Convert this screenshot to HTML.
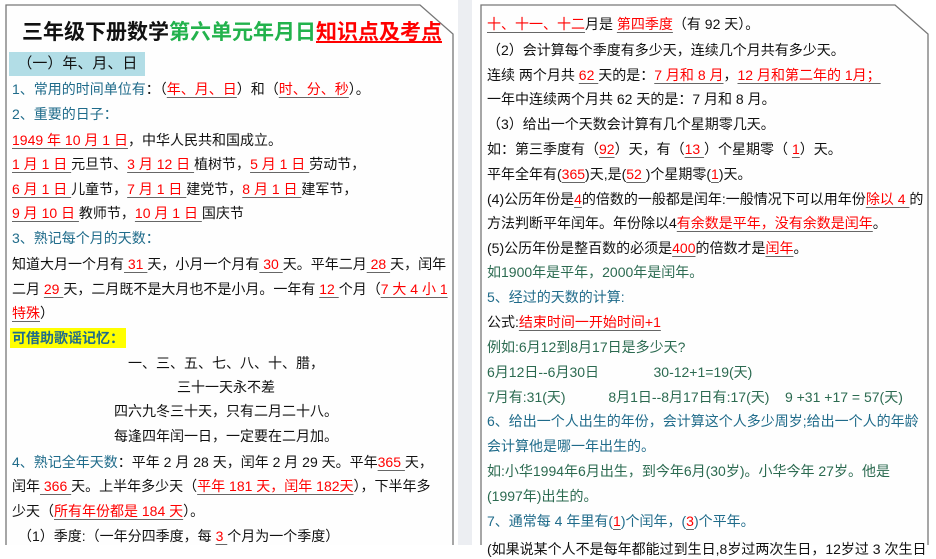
<!DOCTYPE html>
<html><head><meta charset="utf-8"><style>
html,body{margin:0;padding:0}
body{width:936px;height:545px;overflow:hidden;background:#fff;position:relative;font-family:"Liberation Sans","Noto Sans CJK SC",sans-serif;font-size:14px;color:#111}
.strip{position:absolute;left:458px;top:0;width:14px;height:545px;background:#eceef2}
.l{position:absolute;white-space:nowrap;line-height:20px;height:20px}
.r{color:#f00;text-decoration:underline;text-decoration-color:#666;text-underline-offset:3px}
.b{color:#1f6b8a}
.g{color:#2b6a50}
.c{text-align:center;width:440px;left:6px}
svg{position:absolute;left:0;top:0}
</style></head><body>
<div class="strip"></div>
<svg width="936" height="545">
<polyline points="6,545 6,5 420,5 453,34 453,545" fill="#fefefe" stroke="#777" stroke-width="1.3"/>
<polyline points="481,545 481,5 895,5 928,34 928,545" fill="#fefefe" stroke="#777" stroke-width="1.3"/>
</svg>
<div class="l" style="left:22px;top:19px;height:28px;line-height:28px;font-size:21px;font-weight:bold">三年级下册数学<span style="color:#22b24c">第六单元年月日</span><span style="color:#f00;text-decoration:underline">知识点及考点</span></div>
<div class="l" style="left:9px;top:52px;width:136px;height:24px;line-height:24px;background:#b2dde6;font-size:15px">&nbsp;&nbsp;（一）年、月、日</div>
<div class="l b" style="left:12px;top:79px">1、常用的时间单位有<span style="color:#111">：（<span class="r">年、月、日</span>）和（<span class="r">时、分、秒</span>）。</span></div>
<div class="l b" style="left:12px;top:104px">2、重要的日子：</div>
<div class="l" style="left:12px;top:130px"><span class="r">1949 年 10 月 1 日</span>，中华人民共和国成立。</div>
<div class="l" style="left:12px;top:154px"><span class="r">1 月 1 日 </span>元旦节、<span class="r">3 月 12 日 </span>植树节，<span class="r">5 月 1 日 </span>劳动节，</div>
<div class="l" style="left:12px;top:179px"><span class="r">6 月 1 日 </span>儿童节，<span class="r">7 月 1 日 </span>建党节，<span class="r">8 月 1 日 </span>建军节，</div>
<div class="l" style="left:12px;top:203px"><span class="r">9 月 10 日 </span>教师节，<span class="r">10 月 1 日 </span>国庆节</div>
<div class="l b" style="left:12px;top:228px">3、熟记每个月的天数：</div>
<div class="l" style="left:12px;top:254px">知道大月一个月有<span class="r"> 31 </span>天，小月一个月有<span class="r"> 30 </span>天。平年二月<span class="r"> 28 </span>天，闰年</div>
<div class="l" style="left:12px;top:279px">二月 <span class="r">29 </span>天，二月既不是大月也不是小月。一年有 <span class="r">12 </span>个月（<span class="r">7 大 4 小 1</span></div>
<div class="l" style="left:12px;top:303px"><span class="r">特殊</span>）</div>
<div class="l b" style="left:10px;top:328px;background:#ff0;font-weight:bold;padding:0 2px">可借助歌谣记忆：</div>
<div class="l c" style="top:353px">一、三、五、七、八、十、腊，</div>
<div class="l c" style="top:377px">三十一天永不差</div>
<div class="l c" style="top:401px">四六九冬三十天，只有二月二十八。</div>
<div class="l c" style="top:426px">每逢四年闰一日，一定要在二月加。</div>
<div class="l" style="left:12px;top:452px"><span class="b">4、熟记全年天数</span>：平年 2 月 28 天，闰年 2 月 29 天。平年<span class="r">365 </span>天，</div>
<div class="l" style="left:12px;top:476px">闰年<span class="r"> 366 </span>天。上半年多少天（<span class="r">平年 181 天，闰年 182天</span>），下半年多</div>
<div class="l" style="left:12px;top:501px">少天（<span class="r">所有年份都是 184 天</span>）。</div>
<div class="l" style="left:18px;top:526px">（1）季度:（一年分四季度，每 <span class="r">3 </span>个月为一个季度）</div>

<div class="l" style="left:487px;top:14px"><span class="r">十、十一、十二</span>月是 <span class="r">第四季度</span>（有 92 天）。</div>
<div class="l" style="left:487px;top:40px">（2）会计算每个季度有多少天，连续几个月共有多少天。</div>
<div class="l" style="left:487px;top:65px">连续 两个月共 <span class="r">62 </span>天的是：<span class="r">7 月和 8 月</span>，<span class="r">12 月和第二年的 1月；</span></div>
<div class="l" style="left:487px;top:89px">一年中连续两个月共 62 天的是：7 月和 8 月。</div>
<div class="l" style="left:487px;top:114px">（3）给出一个天数会计算有几个星期零几天。</div>
<div class="l" style="left:487px;top:139px">如：第三季度有（<span class="r">92</span>）天，有（<span class="r">13 </span>）个星期零（ <span class="r">1</span>）天。</div>
<div class="l" style="left:487px;top:164px">平年全年有(<span class="r">365</span>)天,是(<span class="r">52 </span>)个星期零(<span class="r">1</span>)天。</div>
<div class="l" style="left:487px;top:189px">(4)公历年份是<span class="r">4</span>的倍数的一般都是闰年:一般情况下可以用年份<span class="r">除以 4 </span>的</div>
<div class="l" style="left:487px;top:213px">方法判断平年闰年。年份除以4<span class="r">有余数是平年，没有余数是闰年</span>。</div>
<div class="l" style="left:487px;top:238px">(5)公历年份是整百数的必须是<span class="r">400</span>的倍数才是<span class="r">闰年</span>。</div>
<div class="l g" style="left:487px;top:262px">如1900年是平年，2000年是闰年。</div>
<div class="l b" style="left:487px;top:287px">5、经过的天数的计算:</div>
<div class="l" style="left:487px;top:312px">公式:<span class="r">结束时间一开始时间+1</span></div>
<div class="l g" style="left:487px;top:337px">例如:6月12到8月17日是多少天?</div>
<div class="l g" style="left:487px;top:362px">6月12日--6月30日&nbsp;&nbsp;&nbsp;&nbsp;&nbsp;&nbsp;&nbsp;&nbsp;&nbsp;&nbsp;&nbsp;&nbsp;&nbsp;&nbsp;30-12+1=19(天)</div>
<div class="l g" style="left:487px;top:387px">7月有:31(天)&nbsp;&nbsp;&nbsp;&nbsp;&nbsp;&nbsp;&nbsp;&nbsp;&nbsp;&nbsp;&nbsp;8月1日--8月17日有:17(天)&nbsp;&nbsp;&nbsp;&nbsp;9 +31 +17 = 57(天)</div>
<div class="l b" style="left:487px;top:411px">6、给出一个人出生的年份，会计算这个人多少周岁;给出一个人的年龄</div>
<div class="l b" style="left:487px;top:436px">会计算他是哪一年出生的。</div>
<div class="l g" style="left:487px;top:461px">如:小华1994年6月出生，到今年6月(30岁)。小华今年 27岁。他是</div>
<div class="l g" style="left:487px;top:486px">(1997年)出生的。</div>
<div class="l b" style="left:487px;top:511px">7、通常每 4 年里有(<span class="r">1</span>)个闰年，(<span class="r">3</span>)个平年。</div>
<div class="l" style="left:487px;top:539px">(如果说某个人不是每年都能过到生日,8岁过两次生日，12岁过 3 次生日</div>
</body></html>
